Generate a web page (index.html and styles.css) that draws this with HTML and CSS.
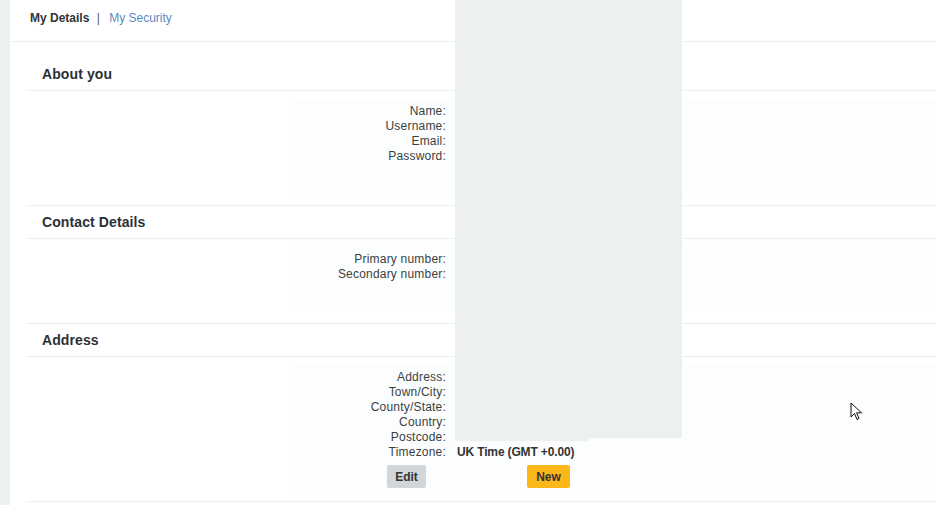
FILE: index.html
```html
<!DOCTYPE html>
<html lang="en">
<head>
    <meta charset="UTF-8">
    <title>My Details</title>
    <link rel="stylesheet" href="styles.css">
</head>
<body>

<div class="panel">
    <div class="tabs">
        <span class="tab active">My Details</span>
        <span class="tab-sep">|</span>
        <a class="tab" href="#">My Security</a>
    </div>

    <div class="sections">
        <div class="section">
            <h2 class="section-title">About you</h2>
            <div class="section-body about">
                <div class="form-box">
                    <div class="row"><span class="label">Name:</span><span class="value"></span></div>
                    <div class="row"><span class="label">Username:</span><span class="value"></span></div>
                    <div class="row"><span class="label">Email:</span><span class="value"></span></div>
                    <div class="row"><span class="label">Password:</span><span class="value"></span></div>
                </div>
            </div>
        </div>

        <div class="section">
            <h2 class="section-title">Contact Details</h2>
            <div class="section-body contact">
                <div class="form-box">
                    <div class="row"><span class="label">Primary number:</span><span class="value"></span></div>
                    <div class="row"><span class="label">Secondary number:</span><span class="value"></span></div>
                </div>
            </div>
        </div>

        <div class="section">
            <h2 class="section-title">Address</h2>
            <div class="section-body address">
                <div class="form-box">
                    <div class="row"><span class="label">Address:</span><span class="value"></span></div>
                    <div class="row"><span class="label">Town/City:</span><span class="value"></span></div>
                    <div class="row"><span class="label">County/State:</span><span class="value"></span></div>
                    <div class="row"><span class="label">Country:</span><span class="value"></span></div>
                    <div class="row"><span class="label">Postcode:</span><span class="value"></span></div>
                    <div class="row"><span class="label">Timezone:</span><span class="value strong">UK Time (GMT +0.00)</span></div>
                    <div class="buttons">
                        <button class="btn btn-edit">Edit</button>
                        <button class="btn btn-new">New</button>
                    </div>
                </div>
            </div>
        </div>
    </div>
</div>

<!-- redacted personal data -->
<div class="redact"></div>
<div class="redact-tail"></div>

<svg class="cursor" width="14" height="20" viewBox="0 0 14 20">
    <path d="M1 1 L1 15 L4.5 11.5 L7 17.5 L9 16.5 L6.6 10.8 L11.5 10.8 Z" fill="#fff" stroke="#111" stroke-width="1" stroke-linejoin="miter"/>
</svg>

</body>
</html>
```

FILE: styles.css
```css
:root {
    --side-bg: #edf0f1;
    --line: #eceeef;
    --text: #3b3f42;
    --heading: #2b3035;
    --link: #5b8bbf;
    --box-bg: #fcfdfd;
    --btn-gray: #d3d6d9;
    --btn-yellow: #fbb818;
}

body {
    margin: 0;
    background-color: var(--side-bg);
    font-family: 'Liberation Sans', Arial, sans-serif;
    font-size: 12px;
    color: var(--text);
}

.panel {
    margin-left: 10px;
    background-color: #fff;
    min-height: 505px;
}

.tabs {
    height: 41px;
    line-height: 36px;
    padding-left: 20px;
    border-bottom: 1px solid var(--line);
    box-sizing: content-box;
}

.tab {
    color: var(--link);
    text-decoration: none;
}

.tab.active {
    color: #333;
    font-weight: bold;
}

.tab-sep {
    margin: 0 6px 0 4px;
    color: #555;
}

.sections {
    padding: 16px 0 0 16px;
}

.section {
    border-bottom: 1px solid var(--line);
}

.section-title {
    margin: 0;
    height: 32px;
    line-height: 32px;
    padding-left: 16px;
    font-size: 14px;
    font-weight: bold;
    color: var(--heading);
    border-bottom: 1px solid var(--line);
    letter-spacing: 0.1px;
}

.section-body {
    padding-top: 8px;
    box-sizing: border-box;
}

.section-body.about { height: 114px; }
.section-body.contact { height: 84px; }
.section-body.address { height: 144px; }

.form-box {
    margin-left: 269px;
    padding: 5px 0 4px;
    background-color: var(--box-bg);
    height: calc(100% - 12px);
    box-sizing: border-box;
}

.row {
    display: flex;
    line-height: 15px;
}

.label {
    width: 151px;
    text-align: right;
    letter-spacing: 0.2px;
}

.value {
    margin-left: 11px;
}

.value.strong {
    font-weight: bold;
    color: #333;
    letter-spacing: -0.15px;
}

.buttons {
    display: flex;
    margin-top: 5px;
}

.btn {
    height: 23px;
    border: none;
    border-radius: 2px;
    font-family: inherit;
    font-size: 12px;
    font-weight: bold;
    color: #333;
    padding: 0;
}

.btn-edit {
    width: 39px;
    margin-left: 92px;
    background-color: var(--btn-gray);
}

.btn-new {
    width: 43px;
    margin-left: 101px;
    background-color: var(--btn-yellow);
}

.redact {
    position: absolute;
    left: 455px;
    top: 0;
    width: 227px;
    height: 438px;
    background-color: var(--side-bg);
}

.redact-tail {
    position: absolute;
    left: 455px;
    top: 438px;
    width: 134px;
    height: 3px;
    background-color: var(--side-bg);
}

.cursor {
    position: absolute;
    left: 850px;
    top: 402px;
}
```
